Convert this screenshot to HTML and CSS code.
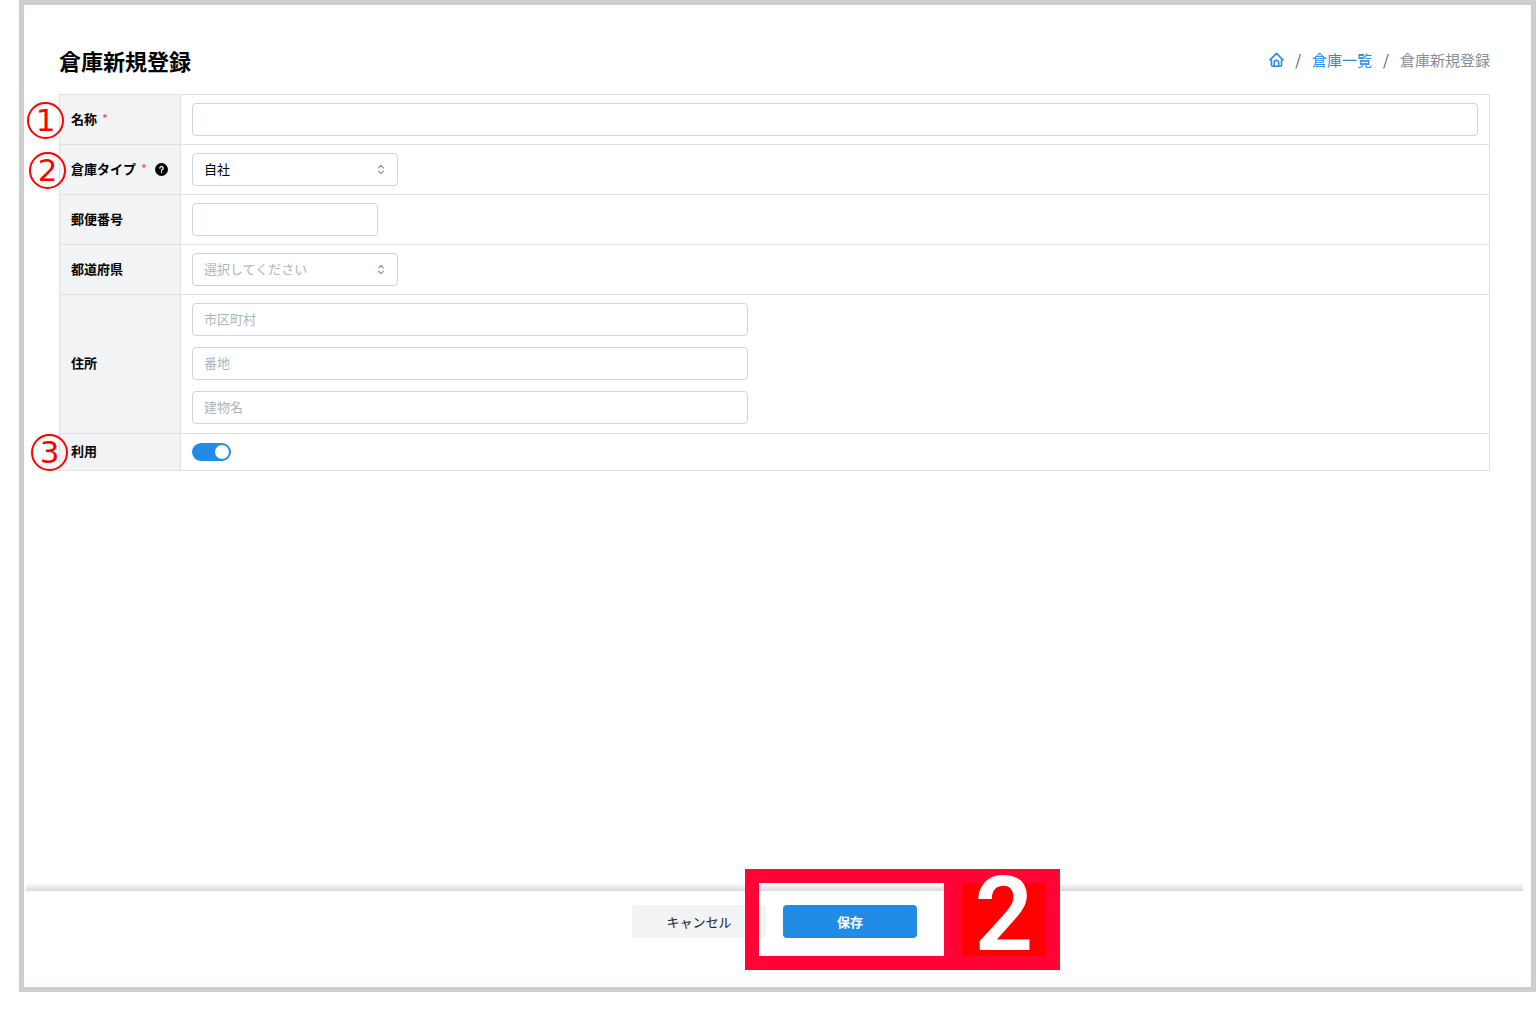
FILE: index.html
```html
<!DOCTYPE html>
<html lang="ja">
<head>
  <meta charset="UTF-8" />
  <meta name="viewport" content="width=device-width, initial-scale=1.0"/>
  <title>倉庫新規登録</title>
  <link rel="stylesheet" href="styles.css">
</head>
<body>
  <form class="page" onsubmit="return false">
    <main class="content">
      <header class="page-header">
        <h1>倉庫新規登録</h1>
        <nav class="breadcrumb">
          <a href="#" aria-label="ホーム">
            <svg class="home-icon" viewBox="0 0 24 24" fill="none" stroke="currentColor" stroke-width="2.600" stroke-linecap="round" stroke-linejoin="round">
              <path d="M4 12H1.500L12 1.500 22.500 12H20v8a2 2 0 0 1-2 2H6a2 2 0 0 1-2-2z"/>
              <path d="M8.500 22v-6a3.500 3.500 0 0 1 7 0v6"/>
            </svg>
          </a>
          <span class="separator">/</span>
          <a href="#">倉庫一覧</a>
          <span class="separator">/</span>
          <span class="current">倉庫新規登録</span>
        </nav>
      </header>

      <table class="form-table">
        <tr>
          <th>
            <span class="step step-1">1</span>
            <label for="name">名称 <span class="required">*</span></label>
          </th>
          <td><input class="text-input" type="text" id="name"></td>
        </tr>
        <tr>
          <th>
            <span class="step step-2">2</span>
            <div class="label-row">
              <label for="type">倉庫タイプ <span class="required">*</span></label>
              <svg class="help-icon" viewBox="0 0 24 24">
                <circle cx="12" cy="12" r="12"/>
                <path d="M9 9.500a3 3 0 1 1 4.500 2.600c-1 .6-1.500 1-1.500 2M12 17v.5" fill="none" stroke="#fff" stroke-width="2.400" stroke-linecap="round"/>
              </svg>
            </div>
          </th>
          <td>
            <div class="select-wrap">
              <select id="type">
                <option>自社</option>
              </select>
              <svg class="chevrons" viewBox="0 0 12 16" fill="none" stroke="currentColor" stroke-width="1.400" stroke-linecap="round" stroke-linejoin="round">
                <path d="M3 6l3-3 3 3M3 10l3 3 3-3"/>
              </svg>
            </div>
          </td>
        </tr>
        <tr>
          <th><label for="zip">郵便番号</label></th>
          <td><input class="text-input zip" type="text" id="zip"></td>
        </tr>
        <tr>
          <th><label for="pref">都道府県</label></th>
          <td>
            <div class="select-wrap">
              <select id="pref" class="empty">
                <option value="">選択してください</option>
              </select>
              <svg class="chevrons" viewBox="0 0 12 16" fill="none" stroke="currentColor" stroke-width="1.400" stroke-linecap="round" stroke-linejoin="round">
                <path d="M3 6l3-3 3 3M3 10l3 3 3-3"/>
              </svg>
            </div>
          </td>
        </tr>
        <tr>
          <th><label for="city">住所</label></th>
          <td>
            <div class="address">
              <input class="text-input" type="text" id="city" placeholder="市区町村">
              <input class="text-input" type="text" id="street" placeholder="番地" aria-label="番地">
              <input class="text-input" type="text" id="building" placeholder="建物名" aria-label="建物名">
            </div>
          </td>
        </tr>
        <tr>
          <th>
            <span class="step step-3">3</span>
            <label for="active">利用</label>
          </th>
          <td><input class="switch" type="checkbox" id="active" checked></td>
        </tr>
      </table>
    </main>

    <footer class="actions">
      <button class="cancel-button" type="button">キャンセル</button>
      <div class="save-wrap">
        <button class="save-button" type="submit">保存</button>
        <div class="callout">
          <div class="callout-frame"></div>
          <div class="callout-number">2</div>
        </div>
      </div>
    </footer>
  </form>
</body>
</html>
```

FILE: styles.css
```css
* {
  box-sizing: border-box;
}
body {
  margin: 0;
  padding: 0 0 44px 19px;
  min-height: 100vh;
  display: flex;
  background: #fff;
  color: #000;
  font-family: "Noto Sans CJK JP", sans-serif;
  font-size: 13px;
  line-height: 20px;
}
.page {
  flex: 1;
  display: flex;
  flex-direction: column;
  border: 5px solid #cfcdce;
}
.content {
  flex: 1;
  padding: 40px 41px 0 35px;
}

/* header */
.page-header {
  display: flex;
  justify-content: space-between;
  align-items: center;
  height: 30px;
  margin-bottom: 19px;
}
h1 {
  margin: 0;
  font-size: 22px;
  line-height: 30px;
}
.breadcrumb {
  display: flex;
  align-items: center;
  gap: 11px;
  font-size: 15px;
}
.breadcrumb a {
  color: #228be6;
  text-decoration: none;
}
.home-icon {
  display: block;
  width: 15px;
  height: 16px;
}
.separator {
  color: #555;
}
.current {
  color: #868e96;
}

/* form */
.form-table {
  width: 100%;
  border-collapse: collapse;
}
.form-table th,
.form-table td {
  border: 1px solid #dee2e6;
  padding: 8px 11px;
  text-align: left;
}
.form-table th {
  position: relative;
  width: 121px;
  padding: 7px 12px 9px 11px;
  background: #f1f3f5;
  white-space: nowrap;
}
.label-row {
  display: flex;
  align-items: center;
  justify-content: space-between;
}
.required {
  margin-left: 2px;
  color: #fa5252;
  font-weight: normal;
}
.help-icon {
  width: 13px;
  height: 13px;
  margin-top: 2px;
}
.text-input,
select {
  display: block;
  width: 100%;
  height: 33px;
  padding: 0 11px 2px;
  border: 1px solid #ced4da;
  border-radius: 4px;
  background: #fff;
  color: #000;
  font: inherit;
}
.text-input::placeholder,
select.empty {
  color: #adb5bd;
  opacity: 1;
}
.zip {
  width: 186px;
}
.select-wrap {
  position: relative;
  width: 206px;
}
select {
  appearance: none;
}
.chevrons {
  position: absolute;
  right: 12px;
  top: 10px;
  width: 10px;
  height: 13px;
  color: #868e96;
  pointer-events: none;
}
.address {
  display: flex;
  flex-direction: column;
  gap: 11px;
  max-width: 556px;
  padding-bottom: 1px;
}
.switch {
  appearance: none;
  display: flex;
  align-items: center;
  justify-content: flex-end;
  width: 39px;
  height: 18px;
  margin: 0;
  padding: 2px;
  border-radius: 9px;
  background: #228be6;
}
.switch::before {
  content: "";
  width: 14px;
  height: 14px;
  border-radius: 50%;
  background: #fff;
}
.switch:not(:checked) {
  justify-content: flex-start;
  background: #ced4da;
}

/* red step numbers over the left edge of the table */
.step {
  position: absolute;
  top: 50%;
  width: 37px;
  height: 37px;
  margin-top: -18px;
  border: 2px solid #f00;
  border-radius: 50%;
  color: #f00;
  font-family: "DejaVu Sans", sans-serif;
  font-size: 31px;
  font-weight: normal;
  line-height: 33px;
  text-align: center;
}
.step-1 {
  left: -33px;
}
.step-2 {
  left: -31px;
}
.step-3 {
  left: -29px;
}

/* footer */
.actions {
  position: relative;
  display: flex;
  justify-content: center;
  gap: 17px;
  height: 97px;
  margin: 0 8px 0 2px;
  padding-top: 14px;
  border-top: 1px solid #dee2e6;
}
.actions::before {
  content: "";
  position: absolute;
  left: 0;
  right: 0;
  bottom: 100%;
  height: 8px;
  background: linear-gradient(#fff, #d8d9da);
}
.actions button {
  width: 134px;
  height: 33px;
  padding: 0;
  border: none;
  border-radius: 4px;
  font: inherit;
  cursor: pointer;
}
.cancel-button {
  background: #f1f3f5;
  color: #222;
}
.actions .save-button {
  background: #228be6;
  color: #fff;
  font-weight: bold;
}
.save-wrap {
  position: relative;
  height: 33px;
}
.callout {
  position: absolute;
  left: -38px;
  top: -36px;
  display: flex;
  width: 315px;
  height: 101px;
  pointer-events: none;
}
.callout-frame {
  flex: 1;
  border: 14px solid #ff0435;
  border-right-width: 18px;
}
.callout-number {
  width: 98px;
  border: 14px solid #ff0435;
  border-left: none;
  background: #f00;
  color: #fff;
  font-family: Roboto, sans-serif;
  font-size: 103px;
  font-weight: 600;
  line-height: 64px;
  text-align: center;
}
```
